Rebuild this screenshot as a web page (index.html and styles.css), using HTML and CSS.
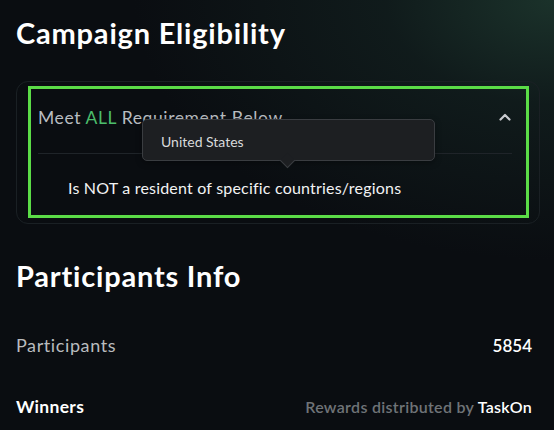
FILE: index.html
```html
<!DOCTYPE html>
<html>
<head>
<meta charset="utf-8">
<link rel="stylesheet" href="styles.css">
</head>
<body>
<div class="page">
  <h2 class="section-title">Campaign Eligibility</h2>
  <div class="card">
    <div class="req-box">
      <div class="req-head">
        <span class="req-label">Meet <span class="all">ALL</span> Requirement Below</span>
        <svg class="chev" width="12" height="8" viewBox="0 0 12 8"><path d="M1.5 6.5 L6 2 L10.5 6.5" fill="none" stroke="#c9ccd0" stroke-width="2.2" stroke-linecap="round" stroke-linejoin="round"/></svg>
      </div>
      <div class="req-item">Is NOT a resident of specific countries/regions</div>
    </div>
    <div class="tooltip">United States</div>
  </div>
  <h2 class="section-title info-title">Participants Info</h2>
  <div class="row first">
    <span class="row-label">Participants</span>
    <span class="row-value">5854</span>
  </div>
  <div class="row winners">
    <span class="row-label strong">Winners</span>
    <span class="row-note">Rewards distributed by <span class="brand">TaskOn</span></span>
  </div>
</div>
</body>
</html>
```
FILE: styles.css
```css
html, body {
  margin: 0;
  padding: 0;
  height: 100%;
}
body {
  background: #0a0d11;
  font-family: Lato, "Noto Sans", sans-serif;
  color: #ffffff;
  overflow: hidden;
}
.page {
  width: 554px;
  height: 430px;
  box-sizing: border-box;
  padding: 16px 16px 0 16px;
  background:
    radial-gradient(ellipse 420px 260px at 100% 0%, rgba(28, 52, 44, 0.95) 0%, rgba(20, 36, 34, 0.6) 40%, rgba(10, 13, 17, 0) 100%),
    #0a0d11;
}
.section-title {
  margin: 0;
  font-size: 29px;
  font-weight: 700;
  line-height: 34px;
  letter-spacing: 0.8px;
}
.card {
  position: relative;
  margin-top: 31px;
  width: 524px;
  box-sizing: border-box;
  border: 1px solid #1a2024;
  border-radius: 12px;
  padding: 4px 10px 5px 11px;
}
.req-box {
  border: 3px solid #5bdc47;
  padding: 0 17px 0 7px;
  height: 132px;
  box-sizing: border-box;
}
.req-head {
  display: flex;
  align-items: center;
  justify-content: space-between;
  height: 64px;
  border-bottom: 1px solid #1f2429;
  margin-right: -3px;
}
.req-label {
  font-size: 17.5px;
  color: #b9bdc1;
  padding-bottom: 8px;
  letter-spacing: 0.6px;
}
.all {
  color: #4cbd6c;
}
.chev {
  margin-right: 1px;
  margin-top: -8px;
}
.req-item {
  padding: 24px 0 0 30px;
  font-size: 16px;
  color: #f2f3f4;
  letter-spacing: 0.2px;
}
.tooltip {
  position: absolute;
  left: 125px;
  top: 37px;
  width: 293px;
  height: 42px;
  box-sizing: border-box;
  padding: 13px 0 0 18px;
  background: #1d1f22;
  border: 1px solid #3a3d41;
  border-radius: 5px;
  font-size: 14px;
  color: #d9dadb;
  box-shadow: 0 2px 6px rgba(0,0,0,0.35);
}
.tooltip::after {
  content: "";
  position: absolute;
  left: 139px;
  bottom: -6px;
  width: 10px;
  height: 10px;
  background: #1d1f22;
  border-right: 1px solid #3a3d41;
  border-bottom: 1px solid #3a3d41;
  transform: rotate(45deg);
}
.info-title {
  margin-top: 35px;
}
.row {
  display: flex;
  justify-content: space-between;
  align-items: center;
  padding-right: 6px;
}
.row-label {
  font-size: 18px;
  color: #b9bcbf;
  letter-spacing: 0.6px;
}
.row-value {
  font-size: 17px;
  color: #ffffff;
  font-weight: 600;
}
.first {
  margin-top: 41px;
}
.winners {
  margin-top: 40px;
}
.strong {
  color: #ffffff;
  font-weight: 700;
  font-size: 17.5px;
  letter-spacing: 0.3px;
}
.row-note {
  font-size: 16px;
  color: #6f7377;
  font-weight: 600;
  letter-spacing: 0.3px;
}
.brand {
  color: #ffffff;
}
```
